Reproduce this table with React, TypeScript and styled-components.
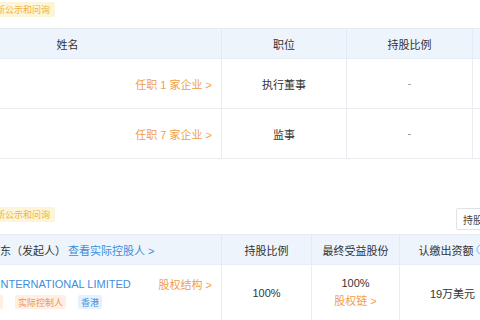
import styled, { createGlobalStyle } from 'styled-components';
import { Info } from 'lucide-react';

const GlobalStyle = createGlobalStyle`
  html, body {
    margin: 0;
    padding: 0;
    background: #fff;
    overflow: hidden;
  }
  body {
    font-family: "Liberation Sans", "Noto Sans CJK SC", sans-serif;
    color: #333;
  }
`;

const Page = styled.div`
  width: 614px;
  margin-left: -86px;
  padding-top: 2px;
`;

const Toolbar = styled.div<{ $top?: number; $bottom: number }>`
  display: flex;
  justify-content: space-between;
  align-items: flex-start;
  padding-left: 68px;
  margin-top: ${(p) => p.$top ?? 0}px;
  margin-bottom: ${(p) => p.$bottom}px;
`;

const Badge = styled.span`
  display: inline-flex;
  align-items: center;
  height: 15px;
  padding: 0 5px;
  font-size: 9px;
  color: #eeb240;
  background-color: #fdf5d9;
  border-radius: 2px;
`;

const FilterButton = styled.button`
  width: 72px;
  height: 22px;
  margin-top: 1px;
  padding: 0 0 0 6px;
  display: flex;
  align-items: center;
  font-family: inherit;
  font-size: 10px;
  color: #444;
  background-color: #fff;
  border: 1px solid #dfe3e8;
  border-radius: 2px;
`;

const Table = styled.div<{ $cols: string }>`
  display: grid;
  grid-template-columns: ${(p) => p.$cols};
  border-top: 1px solid #e6ecf2;
`;

const HeadCell = styled.div<{ $pad?: number }>`
  height: 30px;
  box-sizing: border-box;
  display: flex;
  align-items: center;
  justify-content: ${(p) => (p.$pad !== undefined ? 'flex-start' : 'center')};
  gap: 2px;
  padding-left: ${(p) => p.$pad ?? 0}px;
  font-size: 11px;
  color: #333;
  background-color: #eef4fb;
  border-right: 1px solid #e2eaf3;
  border-bottom: 1px solid #e6edf5;
  white-space: nowrap;
`;

const Cell = styled.div<{ $h: number; $pad?: number; $spread?: boolean }>`
  height: ${(p) => p.$h}px;
  box-sizing: border-box;
  display: flex;
  flex-direction: ${(p) => (p.$spread ? 'row' : 'column')};
  align-items: center;
  justify-content: ${(p) => (p.$spread ? 'space-between' : 'center')};
  gap: 3px;
  padding: 0 ${(p) => (p.$spread ? 9 : 0)}px 0 ${(p) => p.$pad ?? 0}px;
  font-size: 11px;
  color: #333;
  border-right: 1px solid #e9edf2;
  border-bottom: 1px solid #e9edf2;
  white-space: nowrap;
`;

const Dash = styled.span`
  color: #888;
  font-size: 10px;
`;

const OrangeLink = styled.span`
  color: #f0a04b;
  font-size: 11px;
`;

const BlueLink = styled.span`
  color: #3b8ddb;
  font-size: 11px;
`;

const Holder = styled.div`
  display: flex;
  flex-direction: column;
  gap: 3px;
  flex: 1;
`;

const NameLine = styled.div`
  display: flex;
  justify-content: space-between;
  align-items: center;
  height: 16px;
`;

const CompanyName = styled.span`
  color: #3f8edb;
  font-size: 11px;
`;

const Tags = styled.div`
  display: flex;
  gap: 12px;
`;

const Tag = styled.span<{ $tone: 'orange' | 'blue' }>`
  display: inline-flex;
  align-items: center;
  height: 14px;
  padding: 0 3px;
  font-size: 9px;
  border-radius: 2px;
  color: ${(p) => (p.$tone === 'orange' ? '#f0955a' : '#4a94dc')};
  background-color: ${(p) => (p.$tone === 'orange' ? '#fdefe3' : '#e7f1fc')};
`;

const officers = [
  { name: '张伟', count: 1, role: '执行董事' },
  { name: '李敏', count: 7, role: '监事' },
];

function App() {
  return (
    <Page>
      <GlobalStyle />
      <Toolbar $bottom={11}>
        <Badge>最新公示和问询</Badge>
      </Toolbar>
      <Table $cols="308px 125px 126px 1fr">
        <HeadCell>姓名</HeadCell>
        <HeadCell>职位</HeadCell>
        <HeadCell>持股比例</HeadCell>
        <HeadCell></HeadCell>
        {officers.map((o) => (
          <>
            <Cell key={o.name + 'n'} $h={50} $pad={10} $spread>
              <span>{o.name}</span>
              <OrangeLink>任职 {o.count} 家企业 &gt;</OrangeLink>
            </Cell>
            <Cell key={o.name + 'r'} $h={50}>{o.role}</Cell>
            <Cell key={o.name + 's'} $h={50}>
              <Dash>-</Dash>
            </Cell>
            <Cell key={o.name + 'b'} $h={50}></Cell>
          </>
        ))}
      </Table>

      <Toolbar $top={48} $bottom={4}>
        <Badge>最新公示和问询</Badge>
        <FilterButton>持股比例筛选</FilterButton>
      </Toolbar>
      <Table $cols="308px 90px 88px 106px 1fr">
        <HeadCell $pad={75}>
          <span>股东（发起人）</span>
          <BlueLink>查看实际控股人 &gt;</BlueLink>
        </HeadCell>
        <HeadCell>持股比例</HeadCell>
        <HeadCell>最终受益股份</HeadCell>
        <HeadCell>
          <span>认缴出资额</span>
          <Info size={11} color="#4a94dc" strokeWidth={1.5} />
        </HeadCell>
        <HeadCell></HeadCell>

        <Cell $h={56} $pad={56} $spread>
          <Holder>
            <NameLine>
              <CompanyName>ASIA INTERNATIONAL LIMITED</CompanyName>
              <OrangeLink>股权结构 &gt;</OrangeLink>
            </NameLine>
            <Tags>
              <Tag $tone="orange">大股东</Tag>
              <Tag $tone="orange">实际控制人</Tag>
              <Tag $tone="blue">香港</Tag>
            </Tags>
          </Holder>
        </Cell>
        <Cell $h={56}>100%</Cell>
        <Cell $h={56}>
          <span>100%</span>
          <OrangeLink>股权链 &gt;</OrangeLink>
        </Cell>
        <Cell $h={56}>19万美元</Cell>
        <Cell $h={56}></Cell>
      </Table>
    </Page>
  );
}

export default App;
